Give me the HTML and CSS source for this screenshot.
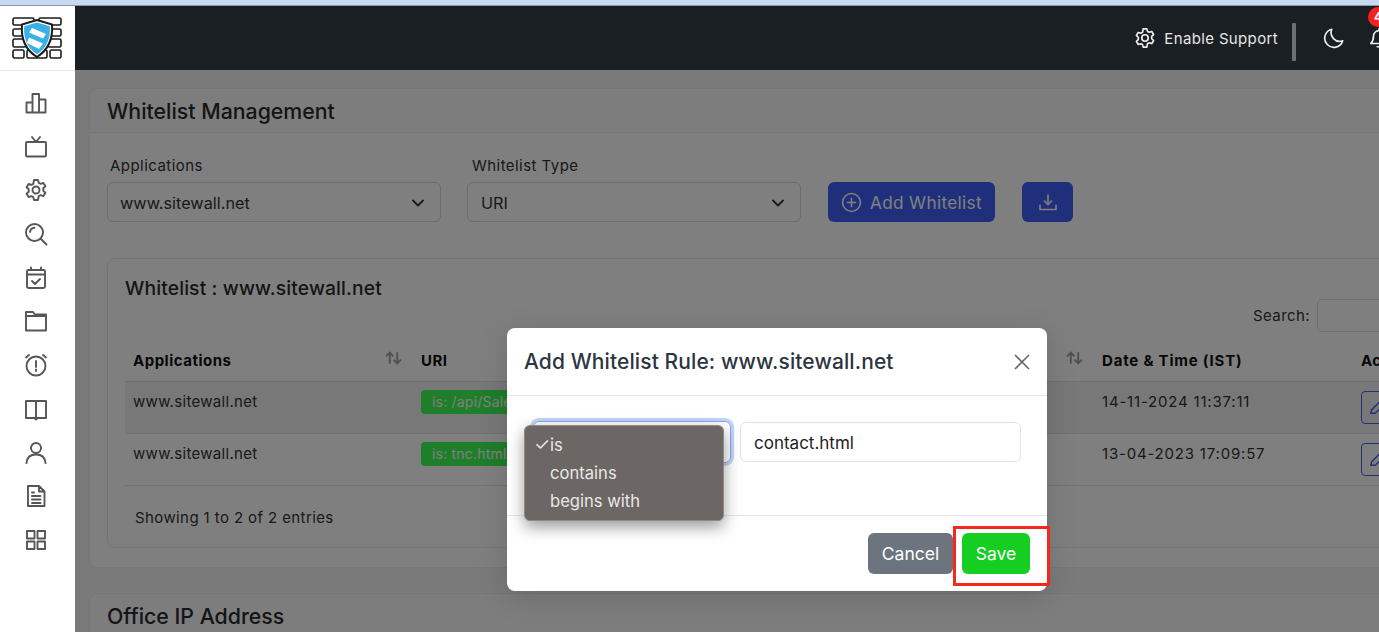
FILE: index.html
```html
<!DOCTYPE html>
<html lang="en">
<head>
<meta charset="utf-8">
<title>Whitelist Management</title>
<link rel="stylesheet" href="styles.css">
</head>
<body>
<div class="strip"></div>
<div class="app">
  <aside class="sidebar">
    <div class="logo">
      <svg width="50" height="42" viewBox="0 0 50 42" fill="none" stroke="#1b1b1b" stroke-width="1.6">
        <rect x="1" y="1" width="21" height="7" rx="1.5"/><rect x="27" y="1" width="22" height="7" rx="1.5"/>
        <rect x="1" y="12" width="13" height="7" rx="1.5"/><rect x="36" y="12" width="13" height="7" rx="1.5"/>
        <rect x="1" y="22" width="13" height="8" rx="1.5"/><rect x="36" y="22" width="13" height="8" rx="1.5"/>
        <rect x="1" y="33" width="11" height="8" rx="1.5"/><rect x="15" y="33" width="20" height="8" rx="1.5"/><rect x="38" y="33" width="11" height="8" rx="1.5"/>
        <path d="M25 3l15 4.500c1 12-2 24-15 32.500C12 32 9 19.500 10 7.500z" fill="#fff" stroke="#1b1b1b" stroke-width="2"/>
        <path d="M25 5.500l12.800 3.800c.8 10.500-2 21-12.800 28C14 30.300 11.500 20 12.200 9.300z" fill="#3bb0e6" stroke="none"/>
        <path d="M20 11l14 6-3 4.500-14-6zM17 20.500l14 6-4 5.500-12-6z" fill="#fff" stroke="none"/>
      </svg>
    </div>
    <nav class="nav">
      <svg class="ico" viewBox="0 0 24 24"><path d="M2.500 21.500V11.500h6v10M8.500 21.500V3h6.500v18.500M15 21.500V8.500h6.500v13zM2.500 21.500h19"/></svg>
      <svg class="ico" viewBox="0 0 24 24"><rect x="2" y="7" width="20" height="14.500" rx="1"/><path d="M8 2L12 7l4-5"/></svg>
      <svg class="ico" viewBox="0 0 24 24"><circle cx="12" cy="12" r="3.500"/><path d="M10 2h4l.7 2.800 2 1 2.700-.9 2 3.400-2.100 2v2.400l2.100 2-2 3.400-2.700-.9-2 1L14 22h-4l-.7-2.800-2-1-2.700.9-2-3.400 2.100-2v-2.400l-2.100-2 2-3.400 2.700.9 2-1z"/></svg>
      <svg class="ico" viewBox="0 0 24 24"><circle cx="10.500" cy="10.500" r="8.500"/><path d="M17 17l5.500 5.500M6 10a5 5 0 0 1 4.500-4.300"/></svg>
      <svg class="ico" viewBox="0 0 24 24"><rect x="3" y="4" width="18" height="18" rx="1.500"/><path d="M3 8.500h18M7 1.500V4M17 1.500V4M8 15l3 3 5-5"/></svg>
      <svg class="ico" viewBox="0 0 24 24"><path d="M2 21.500V3h7l2 2.500h11v16zM2 7h20"/></svg>
      <svg class="ico" viewBox="0 0 24 24"><circle cx="12" cy="13" r="9.500"/><path d="M12 8v6M12 16.500v1.500M2 4.500l3-2.500M22 4.500l-3-2.500"/></svg>
      <svg class="ico" viewBox="0 0 24 24"><path d="M12 4v17M12 4H2v17h10M12 4h10v17H12M10.500 21l1.500 1.500 1.500-1.500"/></svg>
      <svg class="ico" viewBox="0 0 24 24"><circle cx="12" cy="7" r="5"/><path d="M2.500 22c.5-6 4.500-8.500 9.500-8.500s9 2.500 9.500 8.500"/></svg>
      <svg class="ico" viewBox="0 0 24 24"><path d="M4 2h11l5.500 5.500V22H4zM15 2v5.500h5.500M8 12h8.500M8 15.500h8.500M8 19h8.500M8 8.500h2"/></svg>
      <svg class="ico" viewBox="0 0 24 24"><rect x="3" y="3" width="7.500" height="7.500"/><rect x="13.500" y="3" width="7.500" height="7.500"/><rect x="3" y="13.500" width="7.500" height="7.500"/><rect x="13.500" y="13.500" width="7.500" height="7.500"/></svg>
    </nav>
  </aside>
  <div class="content">
    <header class="topbar">
      <svg class="top-ico" viewBox="0 0 24 24"><circle cx="12" cy="12" r="3.500"/><path d="M10 2h4l.7 2.800 2 1 2.700-.9 2 3.400-2.100 2v2.400l2.100 2-2 3.400-2.700-.9-2 1L14 22h-4l-.7-2.800-2-1-2.700.9-2-3.400 2.100-2v-2.400l-2.100-2 2-3.400 2.700.9 2-1z"/></svg>
      <span class="support">Enable Support</span>
      <span class="divider"></span>
      <svg class="top-ico moon" viewBox="0 0 24 24"><path d="M9.500 2.500A10 10 0 1 0 21.500 15 9.500 9.500 0 0 1 9.500 2.500z"/></svg>
      <span class="bell-wrap">
        <svg class="top-ico" viewBox="0 0 24 24"><path d="M3 18c2-2 3-4 3-8a6 6 0 0 1 12 0c0 4 1 6 3 8zM10 21.500h4M12 2v2"/></svg>
        <span class="badge">4</span>
      </span>
    </header>
    <main class="main">
      <section class="card">
        <h2 class="card-head">Whitelist Management</h2>
        <div class="card-body">
          <div class="filters">
            <div class="field">
              <label class="label">Applications</label>
              <div class="select">www.sitewall.net<svg class="chev" viewBox="0 0 16 16"><path d="M3 5.500l5 5 5-5"/></svg></div>
            </div>
            <div class="field">
              <label class="label">Whitelist Type</label>
              <div class="select">URI<svg class="chev" viewBox="0 0 16 16"><path d="M3 5.500l5 5 5-5"/></svg></div>
            </div>
            <button class="btn-primary"><svg class="plus" viewBox="0 0 20 20"><circle cx="10" cy="10" r="8.500"/><path d="M10 5.500v9M5.500 10h9"/></svg>Add Whitelist</button>
            <button class="btn-primary btn-icon"><svg class="dl" viewBox="0 0 20 20"><path d="M10 2.500v10M6 8.500l4 4 4-4M2 12.500v5h16v-5"/></svg></button>
          </div>
          <section class="inner">
            <h3 class="inner-title">Whitelist : www.sitewall.net</h3>
            <div class="search"><span>Search:</span><span class="search-box"></span></div>
            <table class="table">
              <colgroup><col class="c1"><col class="c2"><col class="c3"><col class="c4"></colgroup>
              <thead>
                <tr>
                  <th><div class="th">Applications<svg class="sort" viewBox="0 0 16 13"><path d="M4.500 12V1.500M1 5l3.500-3.500L8 5M11.500 1v10.500M8 8l3.500 3.500L15 8"/></svg></div></th>
                  <th><div class="th">URI<svg class="sort" viewBox="0 0 16 13"><path d="M4.500 12V1.500M1 5l3.500-3.500L8 5M11.500 1v10.500M8 8l3.500 3.500L15 8"/></svg></div></th>
                  <th class="wide">Date &amp; Time (IST)</th>
                  <th>Action</th>
                </tr>
              </thead>
              <tbody>
                <tr class="odd">
                  <td>www.sitewall.net</td>
                  <td><span class="tag">is: /api/Sales</span></td>
                  <td class="wide">14-11-2024 11:37:11</td>
                  <td><span class="edit"><svg class="pen" viewBox="0 0 20 20"><path d="M2 17l1-4L13 3l4 4L7 17z"/></svg></span></td>
                </tr>
                <tr>
                  <td>www.sitewall.net</td>
                  <td><span class="tag">is: tnc.html</span></td>
                  <td class="wide">13-04-2023 17:09:57</td>
                  <td><span class="edit"><svg class="pen" viewBox="0 0 20 20"><path d="M2 17l1-4L13 3l4 4L7 17z"/></svg></span></td>
                </tr>
              </tbody>
            </table>
            <div class="table-foot"><span>Showing 1 to 2 of 2 entries</span><span class="pager">&lt;</span></div>
          </section>
        </div>
      </section>
      <section class="card">
        <h2 class="card-head">Office IP Address</h2>
      </section>
      <div class="backdrop">
        <div class="modal">
          <div class="modal-head">
            <h4 class="modal-title">Add Whitelist Rule: www.sitewall.net</h4>
            <svg class="close" viewBox="0 0 18 18"><path d="M2 2l14 14M16 2L2 16"/></svg>
          </div>
          <div class="modal-body">
            <div class="rule-select">
              <div class="rule-menu">
                <div class="opt"><span class="check">✓</span>is</div>
                <div class="opt">contains</div>
                <div class="opt">begins with</div>
              </div>
            </div>
            <div class="rule-input">contact.html</div>
          </div>
          <div class="modal-foot">
            <button class="btn-cancel">Cancel</button>
            <button class="btn-save">Save</button>
            <span class="highlight"></span>
          </div>
        </div>
      </div>
    </main>
  </div>
</div>
</body>
</html>
```
FILE: styles.css
```css
* { box-sizing: border-box; }
html, body { margin: 0; height: 632px; overflow: hidden; }
body { font-family: Inter, "Liberation Sans", sans-serif; color: #333; background: #fff; }
.strip { height: 6px; background: #c9d9f2; border-bottom: 1px solid #8f97a6; }
.app { display: flex; height: 626px; }

.sidebar { width: 75px; flex: none; background: #fff; }
.logo { height: 65px; display: flex; align-items: center; justify-content: center; border-bottom: 1px solid #e6e6e6; padding-right: 1px; }
.nav { display: flex; flex-direction: column; align-items: center; gap: 19.7px; padding: 20px 3px 0 0; }
.ico { width: 24px; height: 24px; flex: none; fill: none; stroke: #565656; stroke-width: 1.9; stroke-linejoin: round; stroke-linecap: round; }

.content { flex: 1; min-width: 0; display: flex; flex-direction: column; }
.topbar { height: 64px; flex: none; background: #1a1f23; display: flex; align-items: center; justify-content: flex-end; margin-right: -11px; color: #e6e6e6; }
.top-ico { width: 22px; height: 22px; fill: none; stroke: #eee; stroke-width: 1.8; stroke-linejoin: round; stroke-linecap: round; }
.support { font-size: 15px; letter-spacing: .35px; margin-left: 8px; }
.divider { width: 4px; height: 38px; background: #6e7174; margin: 8px 27px 0 14px; border-radius: 1px; }
.moon { margin-right: 23px; }
.bell-wrap { position: relative; display: flex; }
.badge { position: absolute; left: 0; top: -20px; width: 20px; height: 20px; border-radius: 50%; background: #f2231f; color: #fff; font-size: 12px; font-weight: 700; text-align: center; line-height: 20px; }

.main { position: relative; flex: 1; min-height: 0; overflow: hidden; background: #f5f5f5; padding: 18px 0 0 14px; }
.card { width: 1400px; background: #fff; border: 1px solid #ececec; border-radius: 8px; margin-bottom: 25px; }
.card-head { margin: 0; height: 44px; padding: 0 17px; background: #fafafa; border-bottom: 1px solid #e8e8e8; border-radius: 8px 8px 0 0; font-size: 21.3px; font-weight: 500; line-height: 44px; color: #2b2b2b; }
.card-body { padding: 24px 17px 19px; }
.filters { display: flex; align-items: flex-end; }
.field { width: 334px; margin-right: 26px; }
.field + .field { margin-right: 27px; }
.label { display: block; font-size: 15px; letter-spacing: .45px; line-height: 18px; margin: 0 0 7px 3px; color: #333; }
.field + .field .label { margin-left: 5px; }
.select { height: 40px; border: 1px solid #d8d8d8; border-radius: 6px; padding: 1px 13px 0 12px; display: flex; align-items: center; justify-content: space-between; font-size: 16.3px; color: #333; background: #fff; }
.field + .field .select { padding-left: 13px; }
.chev { width: 16px; height: 16px; fill: none; stroke: #333; stroke-width: 1.8; margin-right: 1px; stroke-linecap: round; stroke-linejoin: round; }
.btn-primary { height: 40px; width: 167px; border: 0; border-radius: 6px; background: #3f5ff6; color: #fff; font: 17.2px Inter, sans-serif; letter-spacing: .35px; display: flex; align-items: center; justify-content: center; gap: 8px; padding: 0; }
.btn-icon { width: 51px; margin-left: 27px; }
.plus { width: 21px; height: 21px; fill: none; stroke: #fff; stroke-width: 1.5; }
.dl { width: 20px; height: 20px; fill: none; stroke: #fff; stroke-width: 1.6; }

.inner { margin-top: 36px; height: 290px; border: 1px solid #e8e8e8; border-radius: 8px; padding: 17px 0 0 17px; }
.inner-title { margin: 0; font-size: 19.3px; line-height: 24px; font-weight: 500; letter-spacing: .13px; color: #2b2b2b; }
.search { display: flex; align-items: center; margin-left: 1128px; height: 33px; font-size: 15px; letter-spacing: .4px; gap: 7px; color: #333; margin-top: -1px; }
.search-box { width: 100px; height: 33px; border: 1px solid #ddd; border-radius: 5px; flex: none; }
.table { border-collapse: collapse; table-layout: fixed; width: 1328px; margin: 13px 0 0 0; font-size: 15px; letter-spacing: .3px; color: #333; }
.c1 { width: 288px; } .c2 { width: 681px; } .c3 { width: 259px; } .c4 { width: 100px; }
.table th { height: 36px; padding: 0 8px 4px; text-align: left; font-weight: 700; letter-spacing: .5px; color: #111; border-bottom: 1px solid #dcdcdc; white-space: nowrap; }
.table .wide { letter-spacing: .8px; }
.th { display: flex; justify-content: space-between; align-items: center; }
.sort { width: 17px; height: 14px; fill: none; stroke: #a0a0a0; stroke-width: 1.8; margin-right: 3px; position: relative; top: -3px; }
.table td { height: 52px; padding: 0 8px 11px; border-bottom: 1px solid #e4e4e4; white-space: nowrap; vertical-align: middle; }
.table td:nth-child(2), .table td:last-child { padding-bottom: 0; }
.odd td { background: #f0f0f0; }
.tag { display: inline-block; background: #3dfc55; color: #fff; border-radius: 4px; font-size: 14px; letter-spacing: .2px; line-height: 24px; padding: 0 11px; position: relative; top: -5px; }
.edit { display: inline-flex; width: 34px; height: 33px; border: 1px solid #4a63e8; border-radius: 4px; align-items: center; justify-content: center; }
.pen { width: 18px; height: 18px; fill: none; stroke: #4a63e8; stroke-width: 1.6; }
.table-foot { display: flex; justify-content: space-between; align-items: center; margin: 10px 0 0 10px; width: 1318px; font-size: 15px; letter-spacing: .4px; height: 33px; color: #333; }
.table-foot > span:first-child { position: relative; top: 5px; }
.pager { width: 40px; height: 33px; background: #e6e6e6; border-radius: 5px; color: #777; padding-left: 13px; line-height: 33px; }

.backdrop { position: absolute; inset: 0; background: rgba(0,0,0,.5); display: flex; align-items: flex-start; padding: 258px 0 0 432px; }
.modal { width: 540px; height: 263px; background: #fff; border-radius: 8px; display: flex; flex-direction: column; box-shadow: 0 6px 30px rgba(0,0,0,.15); }
.modal-head { height: 68px; flex: none; display: flex; align-items: center; justify-content: space-between; padding: 0 16px 0 17px; border-bottom: 1px solid #e2e6ee; }
.modal-title { margin: 0; font-size: 21px; font-weight: 500; color: #2d3540; letter-spacing: .1px; }
.close { width: 18px; height: 18px; fill: none; stroke: #6a6a6a; stroke-width: 1.6; }
.modal-body { height: 120px; flex: none; position: relative; display: flex; align-items: flex-start; padding: 26px 26px 0 26px; border-bottom: 1px solid #e2e6ee; gap: 9px; }
.rule-select { width: 198px; height: 42px; margin-top: -1px; border: 1px solid #86a9ee; border-radius: 6px; box-shadow: 0 0 0 3px #c0d4f7; position: relative; flex: none; }
.rule-menu { position: absolute; left: -10px; top: 3px; width: 200px; height: 96px; background: #6c6764; border: 1px solid #8d8a88; border-radius: 6px; box-shadow: 0 6px 16px rgba(0,0,0,.4); padding: 5px 0 0 25px; color: #e9e7e6; font-size: 16.6px; }
.opt { height: 28px; line-height: 28px; position: relative; }
.check { position: absolute; left: -16px; font-size: 18px; }
.rule-input { width: 281px; height: 40px; border: 1px solid #dfe3ea; border-radius: 6px; padding: 0 13px; line-height: 40px; font-size: 17px; color: #222; }
.modal-foot { flex: 1; position: relative; display: flex; justify-content: flex-end; align-items: flex-start; padding: 17px 17px 0 0; gap: 9px; }
.btn-cancel, .btn-save { height: 41px; border: 0; border-radius: 6px; color: #fff; font: 17.5px Inter, sans-serif; padding: 0; }
.btn-cancel { width: 85px; background: #6c757d; }
.btn-save { width: 68px; background: #16cd22; }
.highlight { position: absolute; left: 446px; top: 10px; width: 97px; height: 60px; border: 3px solid #f5281c; pointer-events: none; }
```
